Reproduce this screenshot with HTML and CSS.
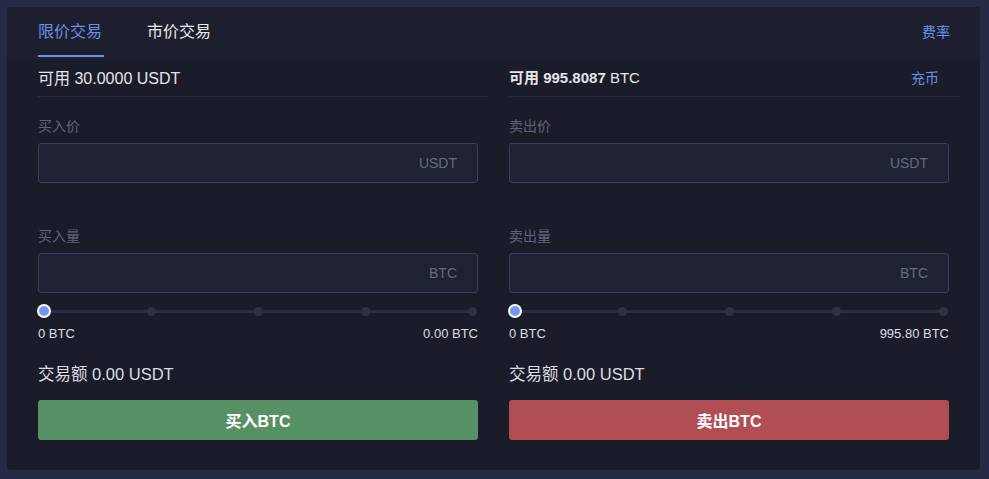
FILE: index.html
```html
<!DOCTYPE html>
<html lang="zh">
<head>
<meta charset="utf-8">
<link rel="stylesheet" href="styles.css">
</head>
<body>
<div class="card">
  <div class="head">
    <div class="tabs">
      <div class="tab active">限价交易</div>
      <div class="tab">市价交易</div>
    </div>
    <a class="link fee">费率</a>
  </div>
  <div class="cols">
    <div class="col">
      <div class="balance big"><span>可用 30.0000 USDT</span></div>
      <div class="form">
        <div class="label">买入价</div>
        <div class="input"><span>USDT</span></div>
        <div class="label label2">买入量</div>
        <div class="input"><span>BTC</span></div>
        <div class="slider">
          <div class="track"></div>
          <i class="dot" style="left:25%"></i>
          <i class="dot" style="left:50%"></i>
          <i class="dot" style="left:75%"></i>
          <i class="dot" style="left:100%"></i>
          <i class="handle"></i>
        </div>
        <div class="range"><span>0 BTC</span><span>0.00 BTC</span></div>
        <div class="total">交易额 0.00 USDT</div>
        <button class="btn buy">买入BTC</button>
      </div>
    </div>
    <div class="col">
      <div class="balance"><span><b>可用 995.8087</b> BTC</span><a class="link">充币</a></div>
      <div class="form">
        <div class="label">卖出价</div>
        <div class="input"><span>USDT</span></div>
        <div class="label label2">卖出量</div>
        <div class="input"><span>BTC</span></div>
        <div class="slider">
          <div class="track"></div>
          <i class="dot" style="left:25%"></i>
          <i class="dot" style="left:50%"></i>
          <i class="dot" style="left:75%"></i>
          <i class="dot" style="left:100%"></i>
          <i class="handle"></i>
        </div>
        <div class="range"><span>0 BTC</span><span>995.80 BTC</span></div>
        <div class="total">交易额 0.00 USDT</div>
        <button class="btn sell">卖出BTC</button>
      </div>
    </div>
  </div>
</div>
</body>
</html>
```

FILE: styles.css
```css
* { box-sizing: border-box; }
html, body { margin: 0; padding: 0; }
body {
  background: #262a45;
  font-family: "Liberation Sans", "Noto Sans CJK SC", sans-serif;
  color: #e4e5ea;
  width: 989px;
  height: 479px;
  padding: 7px 9px 9px 7px;
}
.card {
  background: #1b1c2a;
  border-radius: 4px;
  height: 463px;
  overflow: hidden;
}
.head {
  background: #1d1f2e;
  height: 53px;
  display: flex;
  justify-content: space-between;
  align-items: flex-start;
  padding: 0 30px 0 31px;
}
.tabs { display: flex; gap: 43px; }
.tab {
  font-size: 16px;
  line-height: 22px;
  padding-top: 12px;
  height: 50px;
  color: #e8e9ee;
  font-family: "Noto Sans CJK SC", sans-serif;
}
.tab.active {
  color: #6d8fe6;
  border-bottom: 2px solid #6d8fe6;
  width: 66px;
}
.link {
  color: #6d8fe6;
  font-size: 14px;
  font-family: "Noto Sans CJK SC", sans-serif;
  cursor: pointer;
}
.fee { line-height: 20px; padding-top: 14px; }
.cols {
  display: grid;
  grid-template-columns: 450px 451px;
  column-gap: 21px;
  padding: 0 20px 0 31px;
}
.balance {
  height: 37px;
  display: flex;
  justify-content: space-between;
  align-items: center;
  padding: 0 21px 3px 0;
  border-bottom: 1px solid #272a3c;
  font-size: 15px;
}
.balance.big { font-size: 16px; }
.balance b { font-weight: 600; }
.form { padding-right: 10px; }
.col:last-child .form { padding-right: 11px; }
.label {
  font-size: 14px;
  line-height: 20px;
  color: #5f6478;
  margin-top: 18px;
  margin-bottom: 8px;
  font-family: "Noto Sans CJK SC", sans-serif;
}
.label2 { margin-top: 42px; }
.input {
  height: 40px;
  border: 1px solid #3a3e58;
  background: #1f2235;
  border-radius: 3px;
  display: flex;
  align-items: center;
  justify-content: flex-end;
  padding-right: 20px;
  font-size: 14px;
  color: #656a82;
}
.slider {
  position: relative;
  height: 12px;
  margin: 12px 6px 0 6px;
}
.track {
  position: absolute;
  left: 0; right: 0; top: 5px;
  height: 3px;
  background: #2a2d40;
}
.dot {
  position: absolute;
  top: 2px;
  width: 9px;
  height: 9px;
  margin-left: -4.5px;
  border-radius: 50%;
  background: #2f3246;
}
.handle {
  position: absolute;
  left: 0;
  top: -1px;
  width: 14px;
  height: 14px;
  margin-left: -7px;
  border-radius: 50%;
  background: #7596f0;
  border: 2px solid #ffffff;
}
.range {
  display: flex;
  justify-content: space-between;
  font-size: 13px;
  line-height: 16px;
  margin-top: 9px;
  color: #dcdde3;
}
.total {
  font-size: 16.5px;
  line-height: 22px;
  margin-top: 21px;
  color: #dcdde3;
}
.btn {
  display: block;
  width: 100%;
  height: 40px;
  margin-top: 15px;
  border: none;
  border-radius: 3px;
  color: #ffffff;
  font-size: 16px;
  font-weight: 600;
  font-family: "Liberation Sans", "Noto Sans CJK SC", sans-serif;
}
.buy { background: #579163; }
.sell { background: #b04e53; }
```
